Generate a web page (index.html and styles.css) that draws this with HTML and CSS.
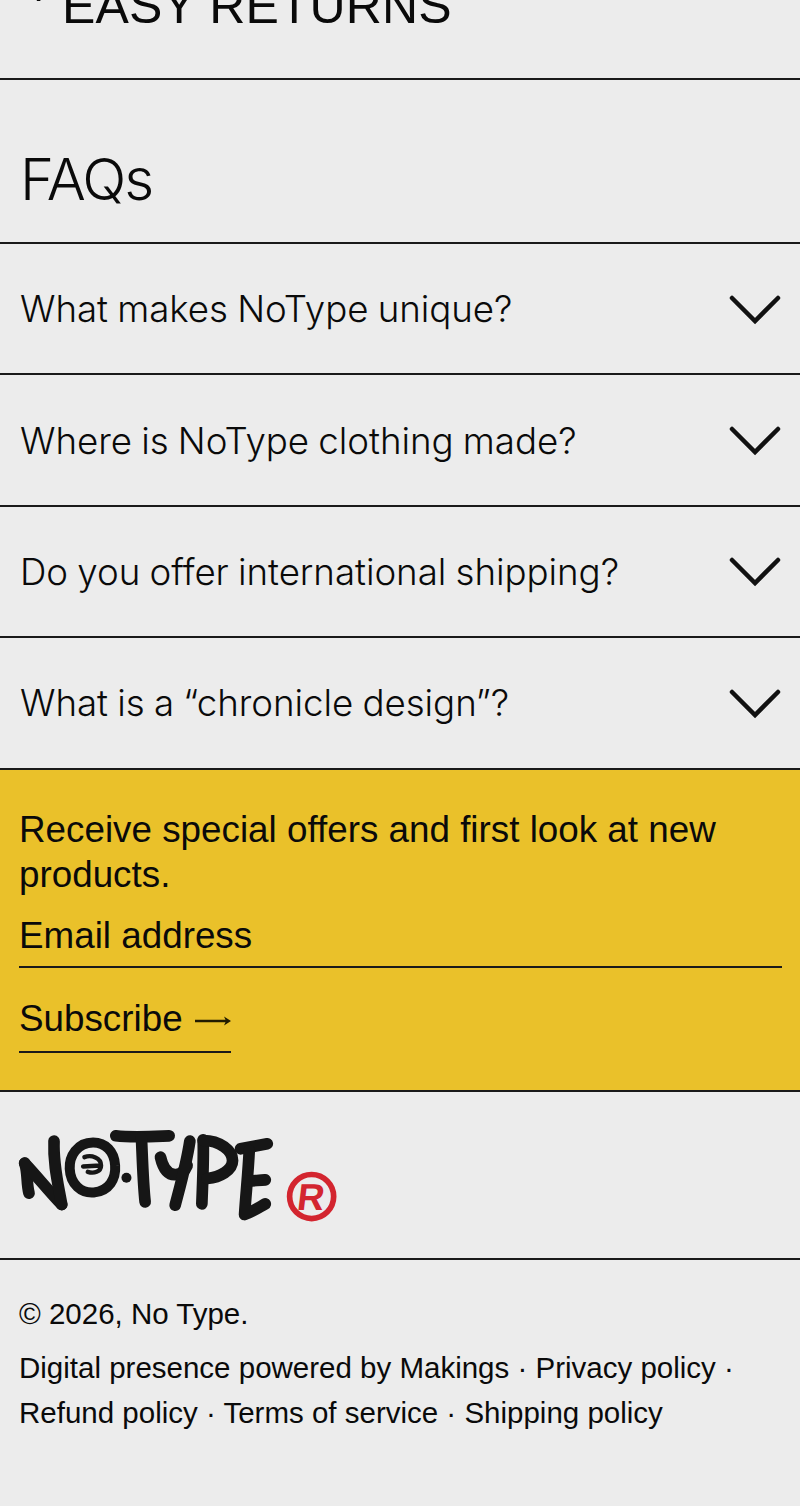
FILE: index.html
```html
<!DOCTYPE html>
<html lang="en">
<head>
  <meta charset="UTF-8" />
  <title>NoType</title>
  <link rel="stylesheet" href="styles.css">
</head>
<body>
  <div class="returns"><span class="returns-plus">+</span><span>EASY RETURNS</span></div>

  <h2 class="faq-title">FAQs</h2>

  <div class="faq-row">
    <span>What makes NoType unique?</span>
    <svg class="chevron" viewBox="0 0 52 30"><path d="M3 3 L26 26 L49 3" /></svg>
  </div>
  <div class="faq-row">
    <span>Where is NoType clothing made?</span>
    <svg class="chevron" viewBox="0 0 52 30"><path d="M3 3 L26 26 L49 3" /></svg>
  </div>
  <div class="faq-row">
    <span>Do you offer international shipping?</span>
    <svg class="chevron" viewBox="0 0 52 30"><path d="M3 3 L26 26 L49 3" /></svg>
  </div>
  <div class="faq-row">
    <span>What is a “chronicle design”?</span>
    <svg class="chevron" viewBox="0 0 52 30"><path d="M3 3 L26 26 L49 3" /></svg>
  </div>

  <section class="newsletter">
    <p class="newsletter-text">Receive special offers and first look at new products.</p>
    <div class="email-field">Email address</div>
    <a class="subscribe" href="#">Subscribe
      <svg class="arrow" viewBox="0 0 36 14"><path class="arrow-line" d="M0 7 H31" /><path class="arrow-head" d="M29 2.5 L36 7 L29 11.5 L31 7 Z" /></svg>
    </a>
  </section>

  <div class="logo-row">
    <svg class="logo" viewBox="40 80 980 290" role="img" aria-label="NoType">
      <g class="logo-ink">
        <path d="M75 188 C85 215 80 250 88 278" />
        <path d="M75 188 C110 225 150 275 186 312" />
        <path d="M163 122 C160 190 175 250 186 312" />
        <path d="M348 106 C400 112 460 108 508 106" />
        <path d="M425 112 C428 180 430 250 436 304" />
        <path d="M482 170 C490 205 505 225 530 222 C548 220 556 210 562 195" />
        <path d="M570 122 C560 190 540 260 526 314" />
        <path d="M610 118 C612 180 608 250 606 310" />
        <path d="M610 120 C660 120 698 150 698 180 C698 210 660 230 622 234" />
        <path d="M722 145 C750 140 775 135 802 130" />
        <path d="M748 150 C745 215 738 280 734 342 C755 335 775 322 796 310" />
        <path d="M745 242 C765 240 780 240 796 238" />
      </g>
      <path class="logo-o" d="M280 126 C232 126 208 168 210 205 C212 252 245 279 282 276 C328 272 349 235 346 195 C344 153 317 126 280 126 Z" />
      <path class="logo-inner" d="M254 170 C275 162 304 172 304 195 C304 214 282 220 264 214 M250 198 L302 195" />
      <circle class="logo-dot" cx="380" cy="232" r="15" />
      <circle class="logo-ring" cx="935" cy="288" r="66" />
      <text class="logo-r" x="933" y="328" text-anchor="middle">R</text>
    </svg>
  </div>

  <footer class="footer">
    <p class="copyright">© 2026, No Type.</p>
    <p class="footer-links">Digital presence powered by Makings · Privacy policy · Refund policy · Terms of service · Shipping policy</p>
  </footer>
</body>
</html>
```

FILE: styles.css
```css
* { box-sizing: border-box; }
html, body { margin: 0; padding: 0; }
body { width: 800px; height: 1506px; overflow: hidden; background: #ececec; color: #0a0a0a; font-family: "Liberation Sans", Arial, sans-serif; }

.returns { height: 80px; display: flex; align-items: flex-end; padding: 0 0 47px 24px; border-bottom: 2px solid #1a1a1a; font-size: 50px; line-height: 1; letter-spacing: 0.15px; }
.returns-plus { width: 38px; margin-bottom: 18px; }

.faq-title { height: 164px; margin: 0; padding: 67px 0 0 20px; border-bottom: 2px solid #1a1a1a; font-family: Inter, sans-serif; font-size: 58px; font-weight: 350; line-height: 64px; letter-spacing: -2px; }

.faq-row { height: 131.4px; display: flex; align-items: center; justify-content: space-between; padding: 0 20px; border-bottom: 2px solid #1a1a1a; font-family: Inter, sans-serif; font-size: 36.7px; font-weight: 350; letter-spacing: -0.05px; word-spacing: -1px; }
.chevron { width: 52px; height: 30px; flex: none; margin: 2px -1px 0 0; }
.chevron path { fill: none; stroke: #111; stroke-width: 4.5px; stroke-linecap: round; }

.newsletter { height: 322px; padding: 37px 18px 0 19px; background: #eac12a; border-bottom: 2px solid #1a1a1a; font-size: 36.8px; }
.newsletter-text { margin: 0; line-height: 45px; }
.email-field { height: 58px; margin-top: 13px; padding-top: 3px; line-height: 45px; border-bottom: 2px solid #1a1a1a; }
.subscribe { display: inline-flex; align-items: center; gap: 12px; margin-top: 29px; height: 56px; padding-bottom: 10px; line-height: 45px; color: #0a0a0a; text-decoration: none; border-bottom: 2px solid #1a1a1a; }
.arrow { width: 36px; height: 14px; margin-top: 4px; }
.arrow-line { fill: none; stroke: #221c00; stroke-width: 2.5px; }
.arrow-head { fill: #221c00; }

.logo-row { height: 168px; padding: 35px 0 0 13px; border-bottom: 2px solid #1a1a1a; }
.logo { display: block; width: 327px; height: 97px; }
.logo-ink path { fill: none; stroke: #161616; stroke-width: 35px; stroke-linecap: round; stroke-linejoin: round; }
.logo-o { fill: none; stroke: #161616; stroke-width: 30px; }
.logo-inner { fill: none; stroke: #161616; stroke-width: 13px; stroke-linecap: round; }
.logo-dot { fill: #161616; }
.logo-ring { fill: none; stroke: #d3252f; stroke-width: 17px; }
.logo-r { fill: #d3252f; font-family: "Liberation Sans", sans-serif; font-weight: 700; font-size: 112px; transform-box: fill-box; transform-origin: center; transform: skewX(-7deg); }

.footer { padding: 36px 19px 0 19px; font-size: 29.5px; }
.copyright { margin: 0; line-height: 36px; }
.footer-links { margin: 13px 0 0; line-height: 45px; }
```
